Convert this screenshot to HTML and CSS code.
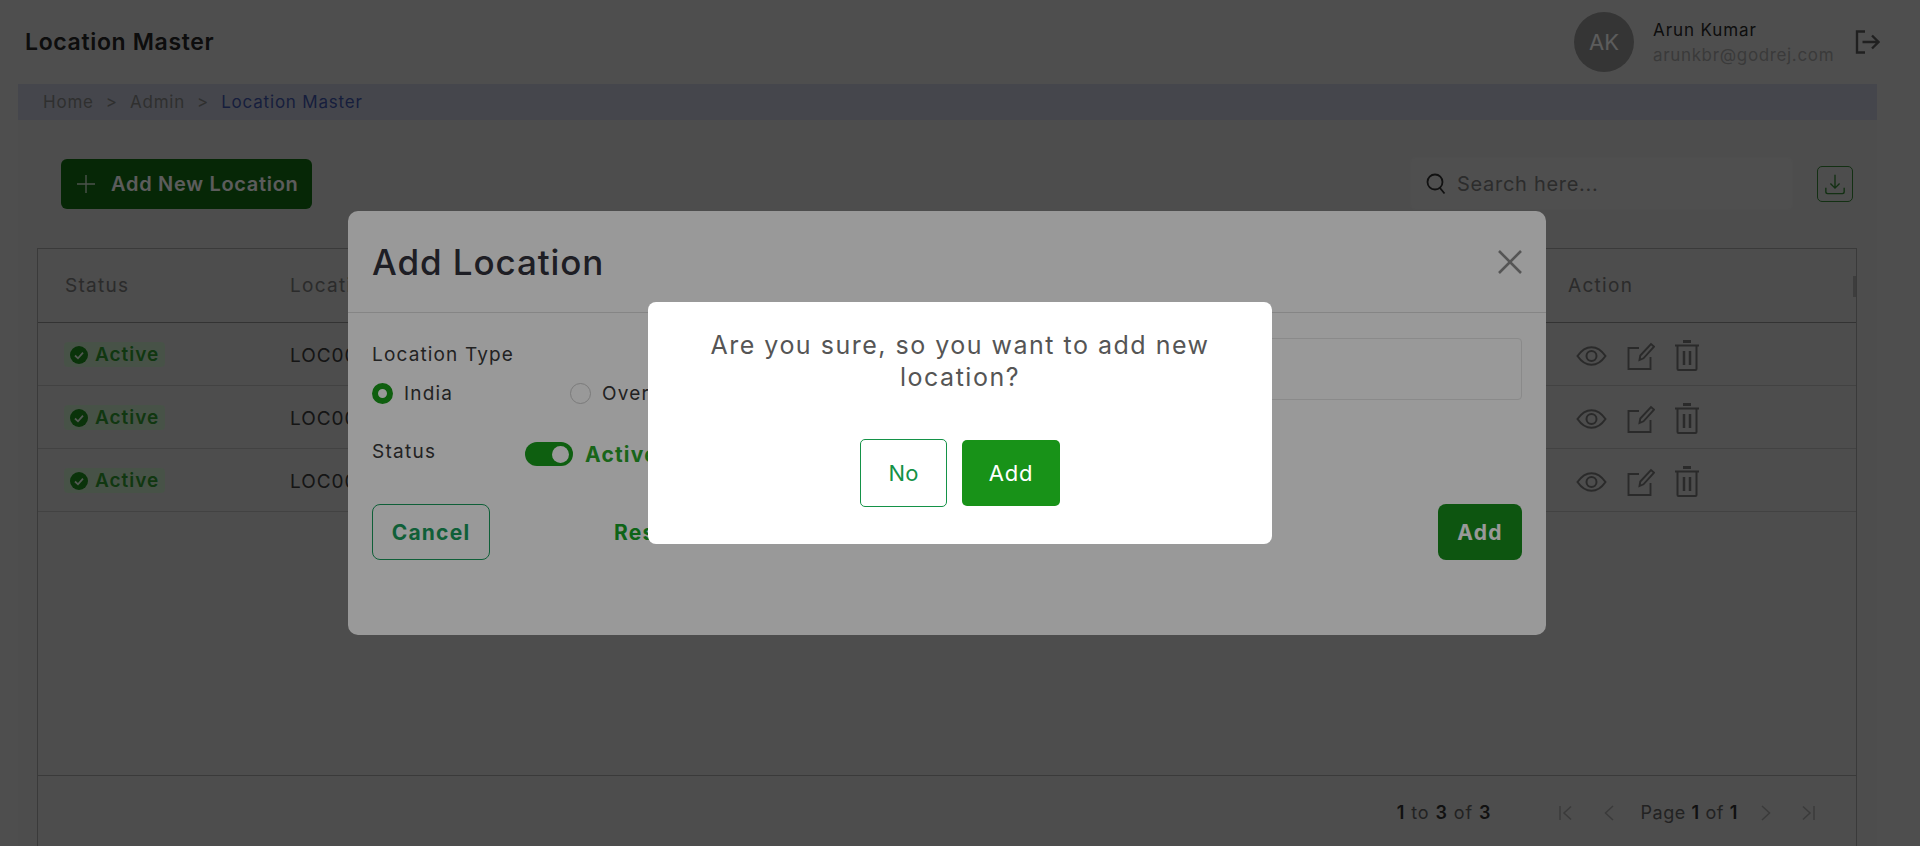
FILE: index.html
```html
<!DOCTYPE html>
<html lang="en">
  <head>
    <meta charset="UTF-8" name="viewport" content="width=device-width, initial-scale=1">
    <title>Location Master</title>
    <link rel="stylesheet" href="styles.css">
  </head>
  <body>
    <div class="page">
      <header class="topbar">
        <h1 class="page_title">Location Master</h1>
        <div class="user">
          <span class="avatar">AK</span>
          <div class="user_text">
            <div class="user_name">Arun Kumar</div>
            <div class="user_mail">arunkbr@godrej.com</div>
          </div>
          <svg class="logout_icon" viewBox="0 0 25 24" fill="none" stroke="currentColor" stroke-width="2.4">
            <path d="M10 1.5H2v21h8"/>
            <path d="M7.5 12H23.5M17 5.5l6.5 6.5-6.5 6.5"/>
          </svg>
        </div>
      </header>

      <nav class="crumbs">
        <span>Home</span><span class="crumb_sep">&gt;</span><span>Admin</span><span class="crumb_sep">&gt;</span><span class="crumb_now">Location Master</span>
      </nav>

      <main class="content">
        <div class="toolbar">
          <button type="button" class="add_new">
            <svg class="plus_icon" viewBox="0 0 20 20" fill="none" stroke="currentColor" stroke-width="1.4"><path d="M10 1v18M1 10h18"/></svg>
            Add New Location
          </button>
          <div class="tools">
            <div class="search">
              <svg class="search_icon" viewBox="0 0 20 22" fill="none" stroke="currentColor" stroke-width="1.8"><circle cx="9" cy="9" r="7.5"/><path d="M14 15l4.5 5.5"/></svg>
              <span class="search_text">Search here...</span>
            </div>
            <button type="button" class="download">
              <svg viewBox="0 0 24 24" fill="none" stroke="currentColor" stroke-width="1.5"><path d="M12 2v14M7 11.5l5 5 5-5"/><path d="M2 16v4.5a2 2 0 0 0 2 2h16a2 2 0 0 0 2-2V16"/></svg>
            </button>
          </div>
        </div>

        <section class="grid_box">
          <table class="grid">
            <colgroup><col class="col_status"><col><col class="col_action"></colgroup>
            <thead>
              <tr><th>Status</th><th>Location Code</th><th>Action <span class="col_grip"></span></th></tr>
            </thead>
            <tbody>
              <tr>
                <td><span class="badge"><svg viewBox="0 0 18 18"><circle cx="9" cy="9" r="9" fill="currentColor"/><path d="M5 9.5l3 2.8 5-5.6" fill="none" stroke="#e8f5e8" stroke-width="1.8"/></svg>Active</span></td>
                <td>LOC001</td>
                <td class="actions">
                  <svg class="eye_icon" viewBox="0 0 31 20" fill="none" stroke="currentColor" stroke-width="2"><path d="M1.5 10C6 3.5 10.5 1.2 15.5 1.2S25 3.5 29.5 10C25 16.5 20.5 18.8 15.5 18.8S6 16.5 1.5 10Z"/><circle cx="15.5" cy="10" r="5"/></svg>
                  <svg class="edit_icon" viewBox="0 0 28 28" fill="none" stroke="currentColor" stroke-width="1.9"><path d="M12 6H1.5v21h22V15"/><path d="M12.5 18l.8-4.5L24 2l3 2.6L16.5 16.3z"/></svg>
                  <svg class="trash_icon" viewBox="0 0 26 31" fill="none" stroke="currentColor" stroke-width="2"><path d="M9 1.5h8" stroke-width="3"/><path d="M1 5.5h24"/><path d="M3.5 5.5V29a1 1 0 0 0 1 1h17a1 1 0 0 0 1-1V5.5"/><path d="M10 11v14M16 11v14" stroke-width="2.5"/></svg>
                </td>
              </tr>
              <tr>
                <td><span class="badge"><svg viewBox="0 0 18 18"><circle cx="9" cy="9" r="9" fill="currentColor"/><path d="M5 9.5l3 2.8 5-5.6" fill="none" stroke="#e8f5e8" stroke-width="1.8"/></svg>Active</span></td>
                <td>LOC002</td>
                <td class="actions">
                  <svg class="eye_icon" viewBox="0 0 31 20" fill="none" stroke="currentColor" stroke-width="2"><path d="M1.5 10C6 3.5 10.5 1.2 15.5 1.2S25 3.5 29.5 10C25 16.5 20.5 18.8 15.5 18.8S6 16.5 1.5 10Z"/><circle cx="15.5" cy="10" r="5"/></svg>
                  <svg class="edit_icon" viewBox="0 0 28 28" fill="none" stroke="currentColor" stroke-width="1.9"><path d="M12 6H1.5v21h22V15"/><path d="M12.5 18l.8-4.5L24 2l3 2.6L16.5 16.3z"/></svg>
                  <svg class="trash_icon" viewBox="0 0 26 31" fill="none" stroke="currentColor" stroke-width="2"><path d="M9 1.5h8" stroke-width="3"/><path d="M1 5.5h24"/><path d="M3.5 5.5V29a1 1 0 0 0 1 1h17a1 1 0 0 0 1-1V5.5"/><path d="M10 11v14M16 11v14" stroke-width="2.5"/></svg>
                </td>
              </tr>
              <tr>
                <td><span class="badge"><svg viewBox="0 0 18 18"><circle cx="9" cy="9" r="9" fill="currentColor"/><path d="M5 9.5l3 2.8 5-5.6" fill="none" stroke="#e8f5e8" stroke-width="1.8"/></svg>Active</span></td>
                <td>LOC003</td>
                <td class="actions">
                  <svg class="eye_icon" viewBox="0 0 31 20" fill="none" stroke="currentColor" stroke-width="2"><path d="M1.5 10C6 3.5 10.5 1.2 15.5 1.2S25 3.5 29.5 10C25 16.5 20.5 18.8 15.5 18.8S6 16.5 1.5 10Z"/><circle cx="15.5" cy="10" r="5"/></svg>
                  <svg class="edit_icon" viewBox="0 0 28 28" fill="none" stroke="currentColor" stroke-width="1.9"><path d="M12 6H1.5v21h22V15"/><path d="M12.5 18l.8-4.5L24 2l3 2.6L16.5 16.3z"/></svg>
                  <svg class="trash_icon" viewBox="0 0 26 31" fill="none" stroke="currentColor" stroke-width="2"><path d="M9 1.5h8" stroke-width="3"/><path d="M1 5.5h24"/><path d="M3.5 5.5V29a1 1 0 0 0 1 1h17a1 1 0 0 0 1-1V5.5"/><path d="M10 11v14M16 11v14" stroke-width="2.5"/></svg>
                </td>
              </tr>
            </tbody>
          </table>
          <footer class="pager">
            <span class="pager_count"><b>1</b> to <b>3</b> of <b>3</b></span>
            <div class="pager_nav">
              <svg class="pager_icon pager_first" viewBox="0 0 14 16" fill="none" stroke="currentColor" stroke-width="1.5"><path d="M1 1v14M12 1.5L5 8l7 6.5"/></svg>
              <svg class="pager_icon pager_prev" viewBox="0 0 14 16" fill="none" stroke="currentColor" stroke-width="1.5"><path d="M11 1L3.5 8l7.5 7"/></svg>
              <span class="pager_page">Page <b>1</b> of <b>1</b></span>
              <svg class="pager_icon pager_next" viewBox="0 0 14 16" fill="none" stroke="currentColor" stroke-width="1.5"><path d="M3 1l7.5 7L3 15"/></svg>
              <svg class="pager_icon pager_last" viewBox="0 0 14 16" fill="none" stroke="currentColor" stroke-width="1.5"><path d="M13 1v14M2 1.5L9 8l-7 6.5"/></svg>
            </div>
          </footer>
        </section>
      </main>
    </div>

    <div class="backdrop backdrop_form">
      <section class="modal">
        <div class="modal_head">
          <h2 class="modal_title">Add Location</h2>
          <svg class="close_icon" viewBox="0 0 24 24" fill="none" stroke="currentColor" stroke-width="2.6"><path d="M1 1l22 22M23 1L1 23"/></svg>
        </div>
        <div class="modal_body">
          <div class="form_left">
            <div class="field_label">Location Type</div>
            <div class="radios">
              <label class="radio_item"><span class="radio radio_on"></span>India</label>
              <label class="radio_item"><span class="radio"></span>Overseas</label>
            </div>
            <div class="status_row">
              <span class="status_label">Status</span>
              <span class="toggle"><span class="toggle_knob"></span></span>
              <span class="toggle_text">Active</span>
            </div>
          </div>
          <div class="form_right"><div class="fake_input"></div></div>
        </div>
        <div class="modal_foot">
          <div class="foot_left">
            <button type="button" class="btn_cancel">Cancel</button>
            <button type="button" class="btn_reset">Reset</button>
          </div>
          <button type="button" class="btn_add">Add</button>
        </div>
      </section>
    </div>

    <div class="backdrop backdrop_confirm">
      <section class="confirm">
        <p class="confirm_text">Are you sure, so you want to add new location?</p>
        <div class="confirm_btns">
          <button type="button" class="confirm_no">No</button>
          <button type="button" class="confirm_yes">Add</button>
        </div>
      </section>
    </div>
  </body>
</html>
```

FILE: styles.css
```css
* {
  box-sizing: border-box;
}

html,
body {
  height: 100%;
}

body {
  margin: 0;
  overflow: hidden;
  background-color: #d9d9d9;
  font-family: Inter, "Noto Sans", sans-serif;
  color: #3a3a3a;
}

button {
  font-family: inherit;
  cursor: pointer;
}

b {
  font-weight: 600;
}

.page {
  height: 846px;
  overflow: hidden;
}

/* top bar */
.topbar {
  display: flex;
  align-items: center;
  justify-content: space-between;
  height: 84px;
  padding: 0 40px 0 25px;
}

.page_title {
  margin: 0;
  font-size: 23px;
  font-weight: 600;
  letter-spacing: 0.65px;
  color: #242424;
}

.user {
  display: flex;
  align-items: center;
}

.avatar {
  display: flex;
  align-items: center;
  justify-content: center;
  width: 60px;
  height: 60px;
  border-radius: 50%;
  background-color: #939393;
  color: #ffffff;
  font-size: 22px;
}

.user_text {
  margin-left: 19px;
  width: 202px;
}

.user_name {
  font-size: 17px;
  letter-spacing: 0.9px;
  color: #272727;
  margin-bottom: 5px;
}

.user_mail {
  font-size: 17px;
  letter-spacing: 0.65px;
  color: #a1a1a1;
}

.logout_icon {
  width: 25px;
  height: 24px;
  color: #5a5a5a;
}

/* breadcrumb */
.crumbs {
  display: flex;
  align-items: center;
  height: 36px;
  margin: 0 43px 0 18px;
  padding-left: 25px;
  background-color: #bfc3d2;
  font-size: 17px;
  letter-spacing: 0.8px;
  color: #838383;
}

.crumb_sep {
  margin: 0 12px;
}

.crumb_now {
  color: #3f55a8;
}

/* content */
.content {
  margin: 0 43px 0 18px;
  padding: 37px 20px 0 19px;
  background-color: #d4d4d4;
}

.toolbar {
  display: flex;
  align-items: center;
  justify-content: space-between;
  height: 53px;
  margin-bottom: 38px;
  padding: 0 4px 0 24px;
}

.add_new {
  display: flex;
  align-items: center;
  width: 251px;
  height: 50px;
  padding: 0 0 0 15px;
  border: none;
  border-radius: 6px;
  background-color: #126c12;
  color: #ffffff;
  font-size: 20px;
  font-weight: 600;
  letter-spacing: 0.7px;
}

.plus_icon {
  width: 20px;
  height: 20px;
  margin-right: 15px;
  opacity: 0.8;
}

.tools {
  display: flex;
  align-items: center;
  gap: 24px;
}

.search {
  display: flex;
  align-items: center;
  width: 383px;
  height: 53px;
  padding-left: 15px;
  border: 1px solid #d9d9d9;
  border-radius: 5px;
  background-color: #dadada;
}

.search_icon {
  width: 20px;
  height: 22px;
  margin-right: 11px;
  color: #2f2f2f;
}

.search_text {
  font-size: 20px;
  letter-spacing: 0.7px;
  color: #7a7a7a;
}

.download {
  display: flex;
  align-items: center;
  justify-content: center;
  width: 36px;
  height: 36px;
  padding: 0;
  border: 1px solid #358535;
  border-radius: 5px;
  background: transparent;
  color: #358535;
}

.download svg {
  width: 22px;
  height: 22px;
}

/* table */
.grid_box {
  display: flex;
  flex-direction: column;
  height: 602px;
  border: 1px solid #a1a1a1;
}

.grid {
  width: 100%;
  border-collapse: collapse;
  table-layout: fixed;
}

.col_status {
  width: 225px;
}

.col_action {
  width: 315px;
}

.grid th {
  position: relative;
  height: 73px;
  padding: 0 0 0 27px;
  border-bottom: 1px solid #8e8e8e;
  font-size: 19px;
  font-weight: 400;
  letter-spacing: 1.3px;
  text-align: left;
  color: #777777;
}

.col_grip {
  position: absolute;
  right: 0;
  top: 27px;
  width: 3px;
  height: 21px;
  background-color: #a8a8a8;
}

.grid td {
  height: 63px;
  padding: 4px 0 0 27px;
  border-bottom: 1px solid #b8b8b8;
  font-size: 19px;
  letter-spacing: 1px;
  color: #3a3a3a;
}

.badge {
  display: inline-flex;
  align-items: center;
  height: 25px;
  padding: 0 6px;
  margin-left: -1px;
  border-radius: 4px;
  background-color: #c6e4c6;
  color: #2f9a2f;
  font-size: 19px;
  font-weight: 600;
}

.badge svg {
  width: 18px;
  height: 18px;
  margin-right: 7px;
  color: #1c8e1c;
}

.grid td.actions {
  color: #757575;
}

.actions svg {
  vertical-align: middle;
}

.eye_icon {
  width: 31px;
  height: 20px;
  margin-left: 8px;
}

.edit_icon {
  width: 28px;
  height: 28px;
  margin-left: 14px;
}

.trash_icon {
  width: 26px;
  height: 31px;
  margin-left: 12px;
}

.pager {
  display: flex;
  align-items: center;
  justify-content: flex-end;
  height: 74px;
  margin-top: auto;
  padding-right: 10px;
  border-top: 1px solid #a1a1a1;
  font-size: 18px;
  letter-spacing: 0.9px;
  color: #5e5e5e;
}

.pager b {
  color: #2f2f2f;
}

.pager_nav {
  display: flex;
  align-items: center;
  margin-left: 68px;
}

.pager_icon {
  width: 14px;
  height: 16px;
  color: #a1a1a1;
}

.pager_first {
  margin-right: 29px;
}

.pager_prev {
  margin-right: 24px;
}

.pager_next {
  margin-right: 28px;
}

.pager_last {
  margin-right: 31px;
}

.pager_page {
  margin-right: 21px;
  letter-spacing: 0.6px;
}

/* overlays */
.backdrop {
  position: fixed;
  top: 0;
  left: 0;
  width: 100%;
  height: 100%;
  display: flex;
  align-items: center;
}

.backdrop_form {
  background-color: rgba(0, 0, 0, 0.4);
  padding-left: 348px;
}

.backdrop_confirm {
  background-color: rgba(0, 0, 0, 0.4);
  justify-content: center;
}

/* add location modal */
.modal {
  width: 1198px;
  height: 424px;
  border-radius: 10px;
  background-color: #ffffff;
  color: #393939;
}

.modal_head {
  display: flex;
  align-items: center;
  justify-content: space-between;
  height: 102px;
  padding: 0 24px;
  border-bottom: 1px solid #dedede;
}

.modal_title {
  margin: 0;
  font-size: 35px;
  font-weight: 500;
  letter-spacing: 0.9px;
  color: #32323c;
}

.close_icon {
  width: 24px;
  height: 24px;
  color: #8e8e8e;
}

.modal_body {
  display: flex;
  justify-content: space-between;
  padding: 25px 24px 0;
}

.field_label {
  font-size: 19px;
  letter-spacing: 1.15px;
  line-height: 30px;
  margin-top: 2px;
}

.radios {
  display: flex;
  margin-top: 12px;
}

.radio_item {
  display: flex;
  align-items: center;
  width: 198px;
  font-size: 19px;
  letter-spacing: 1.2px;
}

.radio {
  width: 21px;
  height: 21px;
  margin-right: 11px;
  border: 1px solid #cccccc;
  border-radius: 50%;
}

.radio_on {
  border: 6px solid #1a9e1a;
}

.status_row {
  display: flex;
  align-items: center;
  margin-top: 35px;
}

.status_label {
  width: 153px;
  font-size: 19px;
  letter-spacing: 1.3px;
  padding-bottom: 5px;
}

.toggle {
  display: flex;
  align-items: center;
  justify-content: flex-end;
  width: 48px;
  height: 24px;
  padding-right: 4px;
  border-radius: 12px;
  background-color: #189e1b;
}

.toggle_knob {
  width: 17px;
  height: 17px;
  border-radius: 50%;
  background-color: #ffffff;
}

.toggle_text {
  margin-left: 12px;
  font-size: 21px;
  font-weight: 700;
  letter-spacing: 1.2px;
  color: #2aa82a;
}

.fake_input {
  width: 720px;
  height: 62px;
  border: 1px solid #e6e6e6;
  border-radius: 4px;
}

.modal_foot {
  display: flex;
  justify-content: space-between;
  margin-top: 36px;
  padding: 0 24px;
}

.foot_left {
  display: flex;
  align-items: center;
}

.btn_cancel {
  width: 118px;
  height: 56px;
  padding: 0;
  border: 1px solid #1a9f5e;
  border-radius: 8px;
  background: transparent;
  color: #1a9f5e;
  font-size: 21px;
  font-weight: 700;
  letter-spacing: 1.2px;
}

.btn_reset {
  margin-left: 124px;
  padding: 0;
  border: none;
  background: transparent;
  color: #18a728;
  font-size: 21px;
  font-weight: 700;
  letter-spacing: 1.2px;
}

.btn_add {
  width: 84px;
  height: 56px;
  padding: 0;
  border: none;
  border-radius: 8px;
  background-color: #178e1b;
  color: #ffffff;
  font-size: 21px;
  font-weight: 700;
  letter-spacing: 1.2px;
}

/* confirm dialog */
.confirm {
  width: 624px;
  height: 242px;
  padding: 27px 50px 0;
  border-radius: 8px;
  background-color: #ffffff;
}

.confirm_text {
  margin: 0;
  font-size: 25px;
  letter-spacing: 1.5px;
  line-height: 32px;
  text-align: center;
  color: #555555;
}

.confirm_btns {
  display: flex;
  align-items: center;
  justify-content: center;
  gap: 15px;
  margin-top: 46px;
}

.confirm_no {
  width: 87px;
  height: 68px;
  border: 1px solid #149247;
  border-radius: 5px;
  background-color: #ffffff;
  color: #149247;
  font-size: 22px;
}

.confirm_yes {
  width: 98px;
  height: 66px;
  border: none;
  border-radius: 5px;
  background-color: #189218;
  color: #ffffff;
  font-size: 22px;
  letter-spacing: 0.8px;
}
```
